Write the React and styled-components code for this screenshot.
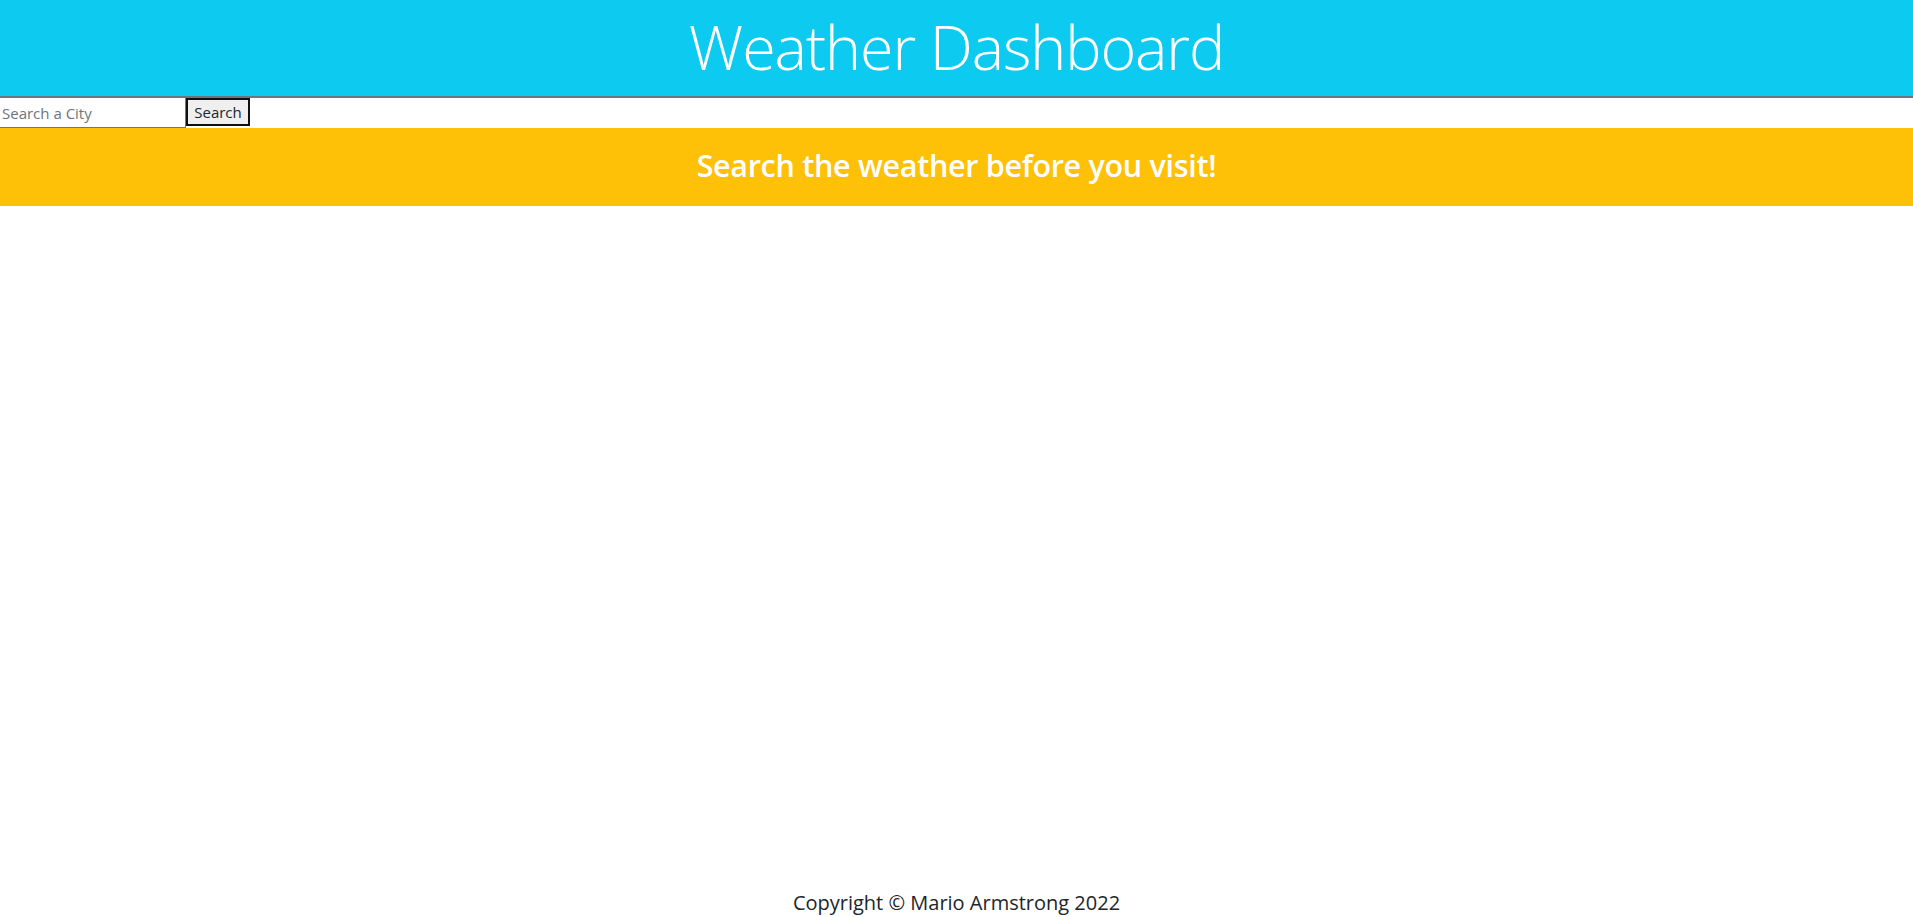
import styled, { createGlobalStyle } from "styled-components";

const GlobalStyle = createGlobalStyle`
  html, body {
    margin: 0;
    padding: 0;
    background: #ffffff;
    font-family: "Open Sans", "Noto Sans", "Liberation Sans", sans-serif;
    color: #212529;
  }
  * {
    box-sizing: border-box;
  }
`;

const Page = styled.div`
  display: flex;
  flex-direction: column;
  min-height: 100vh;
`;

const Header = styled.header`
  height: 98px;
  background-color: #0dcaf0;
  border-bottom: 2px solid #6c757d;
  display: flex;
  align-items: center;
  justify-content: center;
`;

const Title = styled.h1`
  margin: 0;
  color: #ffffff;
  font-size: 61px;
  font-weight: 300;
  letter-spacing: -1.1px;
  line-height: 1;
  padding-bottom: 4px;
`;

const SearchForm = styled.form`
  display: flex;
  align-items: flex-start;
  height: 30px;
`;

const CityInput = styled.input`
  width: 186px;
  height: 30px;
  margin: 0;
  padding: 0 2px;
  border: 1px solid #767676;
  border-left: none;
  border-top: none;
  font-family: inherit;
  font-size: 15px;
  color: #212529;
  outline: none;

  &::placeholder {
    color: #6c757d;
  }
`;

const SearchButton = styled.button`
  width: 64px;
  height: 28px;
  margin: 0;
  padding: 0;
  background: #efefef;
  border: 2px solid #101010;
  font-family: inherit;
  font-size: 15px;
  color: #212529;
  cursor: pointer;
`;

const Banner = styled.section`
  height: 78px;
  background-color: #ffc107;
  display: flex;
  align-items: center;
  justify-content: center;
`;

const Tagline = styled.h2`
  margin: 0;
  padding-bottom: 5px;
  color: #ffffff;
  font-size: 30.5px;
  font-weight: 600;
  letter-spacing: -0.3px;
`;

const Main = styled.main`
  flex: 1;
`;

const Footer = styled.footer`
  display: flex;
  justify-content: center;
  padding-bottom: 1px;
`;

const FooterText = styled.p`
  margin: 0;
  font-size: 20px;
  font-weight: 500;
  color: #212529;
`;

const App = () => {
  return (
    <Page>
      <GlobalStyle />
      <Header>
        <Title>Weather Dashboard</Title>
      </Header>
      <SearchForm onSubmit={(e) => e.preventDefault()}>
        <CityInput type="text" placeholder="Search a City" />
        <SearchButton type="submit">Search</SearchButton>
      </SearchForm>
      <Banner>
        <Tagline>Search the weather before you visit!</Tagline>
      </Banner>
      <Main />
      <Footer>
        <FooterText>Copyright © Mario Armstrong 2022</FooterText>
      </Footer>
    </Page>
  );
};

export default App;
